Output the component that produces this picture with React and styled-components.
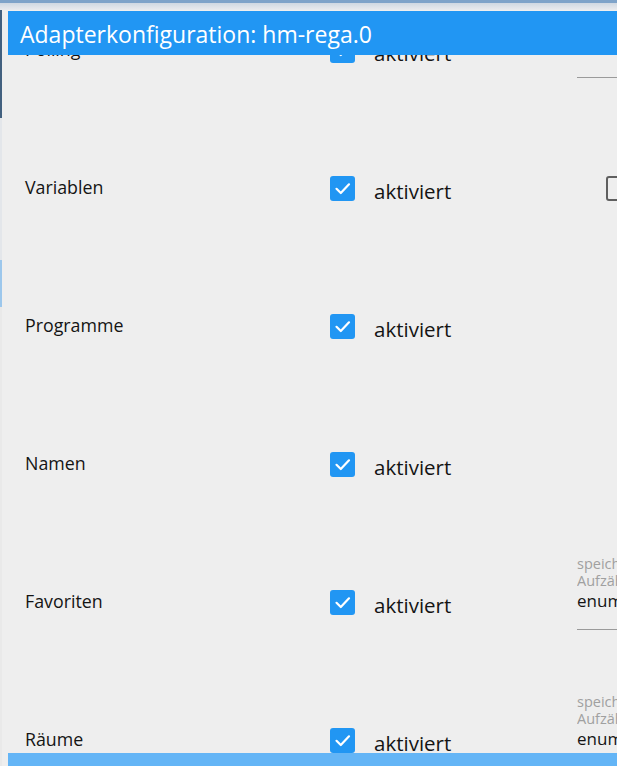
import React from "react";
import styled, { createGlobalStyle } from "styled-components";

const GlobalStyle = createGlobalStyle`
  html, body {
    margin: 0;
    padding: 0;
    background: #eeeeee;
    overflow: hidden;
  }
  * { box-sizing: border-box; }
`;

const Page = styled.div`
  width: 617px;
  height: 766px;
  display: flex;
  flex-direction: column;
  overflow: hidden;
  font-family: "Open Sans", "Noto Sans", sans-serif;
  color: #141414;
`;

const Backdrop = styled.div`
  height: 10px;
  flex: none;
  border-top: 3px solid #7ea3c9;
  background: linear-gradient(#cfd8e2, #e9ebee);
`;

const Body = styled.div`
  flex: 1;
  display: flex;
  min-height: 0;
`;

const SideStrip = styled.div`
  width: 2px;
  flex: none;
  display: flex;
  flex-direction: column;
`;

const StripPart = styled.div`
  height: ${(p) => p.$h}px;
  flex: ${(p) => (p.$h ? "none" : 1)};
  background: ${(p) => p.$c};
`;

const Dialog = styled.div`
  flex: 1;
  min-width: 0;
  display: flex;
  flex-direction: column;
  background: #eeeeee;
  padding: 1px 0 0 6px;
`;

const TitleBar = styled.div`
  height: 44px;
  flex: none;
  background: #2196f3;
  color: #ffffff;
  font-size: 23px;
  line-height: 42px;
  padding: 2px 0 0 12px;
  white-space: nowrap;
  overflow: hidden;
`;

const Content = styled.div`
  flex: 1;
  min-height: 0;
  overflow: hidden;
`;

const List = styled.div`
  margin-top: -73.5px;
`;

const Row = styled.div`
  height: 138px;
  display: grid;
  grid-template-columns: 305px 247px 300px;
  align-items: center;
  padding-left: 17px;
`;

const Label = styled.div`
  font-size: 17.8px;
  white-space: nowrap;
  margin-top: -4px;
`;

const CheckCell = styled.label`
  display: flex;
  align-items: center;
  gap: 19px;
  font-size: 20.5px;
`;

const CheckText = styled.span`
  padding-top: 4px;
`;

const Box = styled.span`
  width: 25px;
  height: 25px;
  flex: none;
  border-radius: 3px;
  display: flex;
  align-items: center;
  justify-content: center;
  background: ${(p) => (p.$checked ? "#2196f3" : "transparent")};
  border: ${(p) => (p.$checked ? "none" : "2px solid #5f5f5f")};
`;

const Side = styled.div`
  white-space: nowrap;
  overflow: hidden;
`;

const SideCheck = styled.div`
  display: flex;
  align-items: center;
  gap: 19px;
  padding-left: 29px;
  font-size: 20.5px;
`;

const Field = styled.div`
  display: flex;
  flex-direction: column;
  padding-bottom: 20px;
`;

const FieldLabel = styled.div`
  font-size: 14.5px;
  line-height: 17px;
  color: #a0a0a0;
`;

const FieldValue = styled.div`
  font-size: 17px;
  line-height: 24px;
  padding-bottom: 16px;
  border-bottom: 1px solid #9a9a9a;
`;

const BottomBar = styled.div`
  height: 13px;
  flex: none;
  background: #64b5f6;
`;

function Check({ checked }) {
  return (
    <Box $checked={checked}>
      {checked && (
        <svg width="25" height="25" viewBox="0 0 25 25">
          <path
            d="M6.5 12.8 L10.8 17 L19 8.3"
            fill="none"
            stroke="#ffffff"
            strokeWidth="2.2"
            strokeLinecap="round"
            strokeLinejoin="round"
          />
        </svg>
      )}
    </Box>
  );
}

function TextField({ lines, value }) {
  return (
    <Field>
      {lines.map((l) => (
        <FieldLabel key={l}>{l}</FieldLabel>
      ))}
      <FieldValue>{value}</FieldValue>
    </Field>
  );
}

const rows = [
  { label: "Polling", side: "field", lines: ["Polling Intervall", "(Sekunden)"], value: "30" },
  { label: "Variablen", side: "check", sideText: "unter Geräten" },
  { label: "Programme" },
  { label: "Namen" },
  { label: "Favoriten", side: "field", lines: ["speichern in", "Aufzählung"], value: "enum.favorites" },
  { label: "Räume", side: "field", lines: ["speichern in", "Aufzählung"], value: "enum.rooms" },
  { label: "Gewerke", side: "field", lines: ["speichern in", "Aufzählung"], value: "enum.functions" },
];

export default function App() {
  return (
    <Page>
      <GlobalStyle />
      <Backdrop />
      <Body>
        <SideStrip>
          <StripPart $h={108} $c="#42607f" />
          <StripPart $h={142} $c="#e3e6ea" />
          <StripPart $h={47} $c="#9cc7ec" />
          <StripPart $c="#e9e9e9" />
        </SideStrip>
        <Dialog>
          <TitleBar>Adapterkonfiguration: hm-rega.0</TitleBar>
          <Content>
            <List>
              {rows.map((r) => (
                <Row key={r.label}>
                  <Label>{r.label}</Label>
                  <CheckCell>
                    <Check checked />
                    <CheckText>aktiviert</CheckText>
                  </CheckCell>
                  <Side>
                    {r.side === "field" && <TextField lines={r.lines} value={r.value} />}
                    {r.side === "check" && (
                      <SideCheck>
                        <Check checked={false} />
                        {r.sideText}
                      </SideCheck>
                    )}
                  </Side>
                </Row>
              ))}
            </List>
          </Content>
          <BottomBar />
        </Dialog>
      </Body>
    </Page>
  );
}
